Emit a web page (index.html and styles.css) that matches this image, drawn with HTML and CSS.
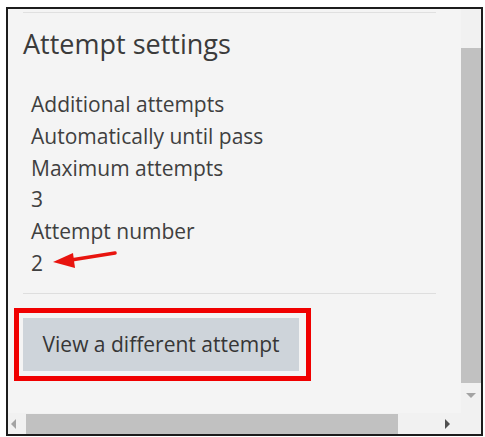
FILE: index.html
```html
<!DOCTYPE html>
<html>
<head>
<meta charset="utf-8">
<link rel="stylesheet" href="styles.css">
</head>
<body>
<div class="frame">
  <div class="viewport">
    <div class="panel">
      <h2 class="title">Attempt settings</h2>
      <ul class="facts">
        <li>Additional attempts</li>
        <li>Automatically until pass</li>
        <li>Maximum attempts</li>
        <li>3</li>
        <li>Attempt number</li>
        <li class="current">2
          <svg class="pointer" width="70" height="20" viewBox="0 0 70 20">
            <line x1="62" y1="2" x2="18" y2="9" stroke="#e8140f" stroke-width="3.5" stroke-linecap="round"/>
            <polygon points="0,11 20,2 22,17" fill="#e8140f"/>
          </svg>
        </li>
      </ul>
      <div class="actions">
        <button class="btn">View a different attempt</button>
      </div>
    </div>
  </div>
  <div class="vbar">
    <div class="vtrack"><div class="vthumb"></div></div>
    <div class="varrow"></div>
  </div>
  <div class="hbar">
    <div class="harrow left"></div>
    <div class="hthumb"></div>
    <div class="harrow right"></div>
  </div>
  <div class="corner"></div>
</div>
</body>
</html>
```

FILE: styles.css
```css
* { box-sizing: border-box; }
html, body { margin: 0; padding: 0; background: #ffffff; }
body { font-family: "Open Sans", "Noto Sans", sans-serif; }

.frame {
  margin: 7px 0 0 6px;
  width: 477px;
  height: 429px;
  border: 2px solid #1c1c1c;
  display: grid;
  grid-template-columns: 453px 20px;
  grid-template-rows: 404px 21px;
  background: #f4f4f4;
}

.viewport {
  overflow: hidden;
  background: #f4f4f4;
}

.panel {
  margin: 3px 0 0 15px;
  width: 413px;
  border-top: 1px solid #e0e0e0;
}

.title {
  margin: 16px 0 0 0;
  font-size: 27px;
  font-weight: 400;
  line-height: 29px;
  color: #3b3b3b;
}

.facts {
  list-style: none;
  margin: 31px 0 0 0;
  padding: 0 0 13px 8px;
  border-bottom: 1px solid #dedede;
}

.facts li {
  font-size: 21px;
  line-height: 31.8px;
  color: #3f3f3f;
}

.current { position: relative; }

.pointer {
  position: absolute;
  left: 22px;
  top: 3px;
}

.actions {
  padding-top: 24px;
}

.btn {
  position: relative;
  width: 276px;
  height: 53px;
  border: none;
  background: #ced4da;
  font-family: "Open Sans", "Noto Sans", sans-serif;
  font-size: 21px;
  color: #363636;
  padding: 0;
  text-align: center;
}

.btn::after {
  content: "";
  position: absolute;
  left: -9px;
  top: -10px;
  right: -12px;
  bottom: -10px;
  border: 5.5px solid #f00000;
}

.vbar {
  background: #f1f1f1;
  position: relative;
}

.vtrack {
  padding-top: 39px;
}

.vthumb {
  height: 335px;
  background: #c1c1c1;
}

.varrow {
  position: absolute;
  left: 5px;
  top: 384px;
  width: 0;
  height: 0;
  border-left: 5px solid transparent;
  border-right: 5px solid transparent;
  border-top: 5px solid #a3a3a3;
}

.hbar {
  background: #f1f1f1;
  display: flex;
  align-items: center;
  padding-left: 3px;
}

.hthumb {
  margin-left: 10px;
  width: 372px;
  height: 20px;
  background: #c1c1c1;
}

.harrow {
  width: 0;
  height: 0;
  border-top: 5px solid transparent;
  border-bottom: 5px solid transparent;
}

.harrow.left { border-right: 5px solid #a3a3a3; }
.harrow.right { border-left: 5px solid #505050; margin-left: 47px; }

.corner { background: #f1f1f1; }
```
